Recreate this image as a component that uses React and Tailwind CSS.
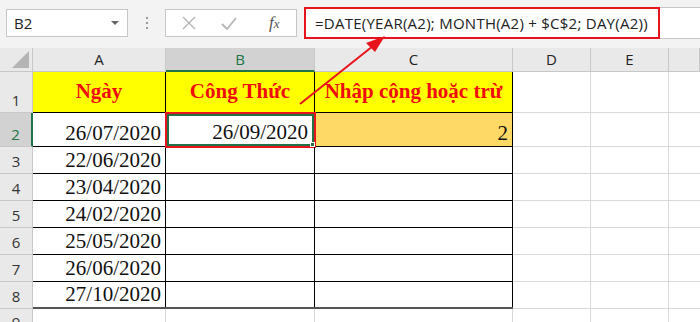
import React from "react";

const cols = [133, 149, 198, 78, 78];
const letters = ["A", "B", "C", "D", "E", ""];
const dates = ["26/07/2020", "22/06/2020", "23/04/2020", "24/02/2020", "25/05/2020", "26/06/2020", "27/10/2020"];

function RowHead({ n, h, active, top }) {
  return (
    <div
      className={`flex w-[33px] shrink-0 justify-center overflow-hidden border-b border-[#c8c8c8] text-[15px] ${
        top ? "items-start pt-[2px]" : "items-end pb-[1px]"
      } ${active ? "bg-[#d2d2d2] text-[#217346] border-r-2 border-r-[#217346]" : "bg-[#e9e9e9] text-[#333] border-r border-r-[#c8c8c8]"}`}
      style={{ height: h }}
    >
      {n}
    </div>
  );
}

function Cell({ w, className = "", children }) {
  return (
    <div className={`flex shrink-0 items-end ${className}`} style={{ width: w }}>
      {children}
    </div>
  );
}

export default function App() {
  return (
    <div className="relative h-[322px] w-[700px] overflow-hidden bg-white font-['Open_Sans','Liberation_Sans',sans-serif]">
      {/* formula bar */}
      <div className="flex h-[48px] items-start bg-[#f3f3f3] pt-[9px]">
        <div className="ml-[6px] flex h-[28px] w-[122px] items-center justify-between border border-[#c6c6c6] bg-white pl-[7px] pr-[8px] text-[15px] text-[#222]">
          <span>B2</span>
          <span className="h-0 w-0 border-x-[4px] border-t-[4px] border-x-transparent border-t-[#666]" />
        </div>
        <div className="ml-[18px] mr-[17px] flex h-[28px] flex-col items-center justify-center gap-[3px]">
          <span className="h-[2px] w-[2px] bg-[#999]" />
          <span className="h-[2px] w-[2px] bg-[#999]" />
          <span className="h-[2px] w-[2px] bg-[#999]" />
        </div>
        <div className="flex h-[28px] w-[132px] items-center border border-[#c6c6c6] bg-white text-[#bbb]">
          <svg width="14" height="14" viewBox="0 0 14 14" className="ml-[16px]">
            <path d="M1 1 L13 13 M13 1 L1 13" stroke="#b5b5b5" strokeWidth="1.4" fill="none" />
          </svg>
          <svg width="16" height="13" viewBox="0 0 16 13" className="ml-[25px]">
            <path d="M1 7 L6 12 L15 1" stroke="#b5b5b5" strokeWidth="1.8" fill="none" />
          </svg>
          <span className="ml-[32px] font-['Liberation_Serif',serif] text-[17px] italic text-[#555]">
            f<span className="text-[13px]">x</span>
          </span>
        </div>
        <div className="ml-[7px] flex h-[32px] flex-1 -translate-y-[2px] items-center border-y border-[#c6c6c6] bg-white">
          <div className="flex h-[32px] w-[356px] items-center border-2 border-[#e8141b] pl-[9px] text-[15px] tracking-[0.25px] text-[#222]">
            =DATE(YEAR(A2); MONTH(A2) + $C$2; DAY(A2))
          </div>
        </div>
      </div>

      {/* column headers */}
      <div className="flex h-[24px] bg-[#e9e9e9] text-[15px] text-[#222]">
        <div className="relative w-[33px] shrink-0 border-r border-b border-[#c8c8c8]">
          <svg className="absolute bottom-[3px] right-[3px]" width="17" height="17" viewBox="0 0 17 17">
            <path d="M17 0 L17 17 L0 17 Z" fill="#b4b4b4" />
          </svg>
        </div>
        {letters.map((l, i) => (
          <div
            key={i}
            className={`flex items-center justify-center border-r border-[#c8c8c8] ${
              l === "B" ? "bg-[#d2d2d2] text-[#217346] border-b-2 border-b-[#217346]" : "border-b border-b-[#c8c8c8]"
            } ${i === 5 ? "flex-1" : "shrink-0"}`}
            style={i < 5 ? { width: cols[i] } : undefined}
          >
            {l}
          </div>
        ))}
      </div>

      {/* row 1 */}
      <div className="flex h-[41px]">
        <RowHead n={1} h={41} />
        <div className="flex border-b border-black bg-[#ffff00] font-['Liberation_Serif',serif] text-[21px] font-bold text-[#f00c0c]">
          <Cell w={133} className="justify-center border-r border-black pb-[5px]">Ngày</Cell>
          <Cell w={149} className="justify-center border-r border-black pb-[5px]">Công Thức</Cell>
          <Cell w={198} className="justify-center border-r border-black pb-[5px]">Nhập cộng hoặc trừ</Cell>
        </div>
        <Cell w={78} className="border-r border-b border-[#d9d9d9]" />
        <Cell w={78} className="border-r border-b border-[#d9d9d9]" />
        <div className="flex-1 border-b border-[#d9d9d9]" />
      </div>

      {/* rows 2-8 */}
      {dates.map((d, i) => {
        const h = i === 0 ? 34 : 27;
        return (
          <div key={d} className="flex" style={{ height: h }}>
            <RowHead n={i + 2} h={h} active={i === 0} />
            <div className={`flex border-b font-['Liberation_Serif',serif] text-[21px] leading-none text-[#111] ${i === 6 ? "border-b-2 border-[#555]" : "border-black"}`}>
              <Cell w={133} className="justify-end border-r border-black pb-[2px] pr-[4px]">{d}</Cell>
              <Cell w={149} className="relative justify-end border-r border-black pb-[3px] pr-[6px]">
                {i === 0 && (
                  <>
                    <span className="absolute inset-[-1px_-2px_-2px_-1px] border-2 border-[#e8141b]" />
                    <span className="absolute inset-[1px_0px_0px_1px] border-2 border-[#217346]" />
                    <span className="absolute bottom-[-1px] right-[-1px] h-[5px] w-[5px] border border-white bg-[#217346]" />
                    26/09/2020
                  </>
                )}
              </Cell>
              <Cell w={198} className={`justify-end border-r border-black pb-[2px] pr-[4px] ${i === 0 ? "bg-[#fed966]" : ""}`}>
                {i === 0 ? "2" : ""}
              </Cell>
            </div>
            <Cell w={78} className="border-r border-b border-[#d9d9d9]" />
            <Cell w={78} className="border-r border-b border-[#d9d9d9]" />
            <div className="flex-1 border-b border-[#d9d9d9]" />
          </div>
        );
      })}

      {/* row 9 */}
      <div className="flex h-[24px]">
        <RowHead n={9} h={24} top />
        <Cell w={133} className="border-r border-[#d9d9d9]" />
        <Cell w={149} className="border-r border-[#d9d9d9]" />
        <Cell w={198} className="border-r border-[#d9d9d9]" />
        <Cell w={78} className="border-r border-[#d9d9d9]" />
        <Cell w={78} className="border-r border-[#d9d9d9]" />
      </div>

      {/* annotation arrow */}
      <svg className="pointer-events-none absolute left-0 top-0" width="700" height="322">
        <line x1="300" y1="104" x2="378" y2="42" stroke="#e8141b" strokeWidth="2" />
        <path d="M385 36 L366 43 L375 52 Z" fill="#e8141b" />
      </svg>
    </div>
  );
}
